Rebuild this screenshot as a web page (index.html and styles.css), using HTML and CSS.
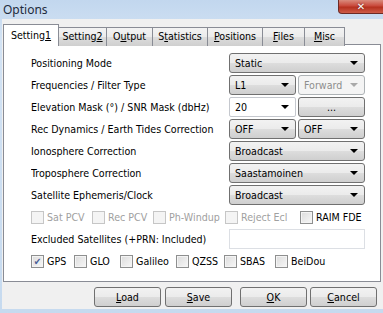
FILE: index.html
```html
<!DOCTYPE html>
<html lang="en">
<head>
  <meta charset="UTF-8">
  <title>Options</title>
  <link rel="stylesheet" href="styles.css">
</head>
<body>
  <div class="window">
    <div class="titlebar">
      <span class="title">Options</span>
      <div class="close"><span class="x">&#x2715;</span></div>
    </div>

    <div class="client">
      <div class="tabs">
        <div class="tab active">Setting<u>1</u></div>
        <div class="tab t-set2">Setting<u>2</u></div>
        <div class="tab t-out">O<u>u</u>tput</div>
        <div class="tab t-stat">S<u>t</u>atistics</div>
        <div class="tab t-pos"><u>P</u>ositions</div>
        <div class="tab t-files"><u>F</u>iles</div>
        <div class="tab t-misc"><u>M</u>isc</div>
      </div>

      <div class="panel">
        <div class="row">
          <span class="label">Positioning Mode</span>
          <div class="combo wide">Static<i class="arrow"></i></div>
        </div>
        <div class="row">
          <span class="label">Frequencies / Filter Type</span>
          <div class="pair">
            <div class="combo">L1<i class="arrow"></i></div>
            <div class="combo disabled">Forward<i class="arrow"></i></div>
          </div>
        </div>
        <div class="row">
          <span class="label">Elevation Mask (&deg;) / SNR Mask (dbHz)</span>
          <div class="pair">
            <div class="combo edit">20<i class="arrow"></i></div>
            <div class="button dots">...</div>
          </div>
        </div>
        <div class="row">
          <span class="label">Rec Dynamics / Earth Tides Correction</span>
          <div class="pair">
            <div class="combo">OFF<i class="arrow"></i></div>
            <div class="combo">OFF<i class="arrow"></i></div>
          </div>
        </div>
        <div class="row">
          <span class="label">Ionosphere Correction</span>
          <div class="combo wide">Broadcast<i class="arrow"></i></div>
        </div>
        <div class="row">
          <span class="label">Troposphere Correction</span>
          <div class="combo wide">Saastamoinen<i class="arrow"></i></div>
        </div>
        <div class="row">
          <span class="label">Satellite Ephemeris/Clock</span>
          <div class="combo wide">Broadcast<i class="arrow"></i></div>
        </div>

        <div class="checks opts">
          <label class="check disabled"><i class="box"></i>Sat PCV</label>
          <label class="check disabled"><i class="box"></i>Rec PCV</label>
          <label class="check disabled"><i class="box"></i>Ph-Windup</label>
          <label class="check disabled"><i class="box"></i>Reject Ecl</label>
          <label class="check"><i class="box"></i>RAIM FDE</label>
        </div>

        <div class="row excl">
          <span class="label">Excluded Satellites (+PRN: Included)</span>
          <div class="textbox"></div>
        </div>

        <div class="checks systems">
          <label class="check"><i class="box on">&#x2714;</i>GPS</label>
          <label class="check"><i class="box"></i>GLO</label>
          <label class="check"><i class="box"></i>Galileo</label>
          <label class="check"><i class="box"></i>QZSS</label>
          <label class="check"><i class="box"></i>SBAS</label>
          <label class="check"><i class="box"></i>BeiDou</label>
        </div>
      </div>

      <div class="buttons">
        <div class="button b-load"><u>L</u>oad</div>
        <div class="button b-save"><u>S</u>ave</div>
        <div class="button b-ok"><u>O</u>K</div>
        <div class="button b-cancel"><u>C</u>ancel</div>
      </div>
    </div>
  </div>
</body>
</html>
```

FILE: styles.css
```css
html, body { margin: 0; padding: 0; }
body { width: 383px; height: 313px; overflow: hidden; font-family: "DejaVu Sans Condensed", "DejaVu Sans", sans-serif; font-size: 10.6px; color: #000; }

.window { width: 383px; height: 313px; background: linear-gradient(#c2d7ee, #d3e3f4 40px, #c6daef); display: flex; flex-direction: column; }

.titlebar { height: 19px; position: relative; flex: none; }
.title { position: absolute; left: 3px; top: 2px; font-family: "Noto Sans", sans-serif; font-size: 12px; line-height: 16px; color: #1e2b3c; }
.close { position: absolute; right: -1px; top: 0; box-sizing: border-box; width: 46px; height: 14px; border: 1px solid #6d2a24; border-top: none; border-radius: 0 0 0 4px; background: linear-gradient(#d98b7d, #c9493b 45%, #b5311f 55%, #cf5c48); display: flex; align-items: center; justify-content: center; }
.x { color: #fff; font-family: "DejaVu Sans", sans-serif; font-size: 10px; font-weight: bold; line-height: 13px; text-shadow: 0 0 2px #5a1b15; }

.client { margin: 0 0 4px 2px; flex: 1; background: #f0f0f0; padding-top: 5px; display: flex; flex-direction: column; }

.tabs { display: flex; height: 21px; padding-left: 1px; position: relative; z-index: 1; }
.tab { box-sizing: border-box; height: 19px; margin-top: 3px; border: 1px solid #898c95; border-bottom: none; border-left: none; background: linear-gradient(#f3f3f3, #ebebeb 50%, #dddddd 51%, #cfcfcf); text-align: center; line-height: 17px; }
.tab.active { height: 22px; margin-top: 0; width: 56px; border-left: 1px solid #898c95; background: #fff; line-height: 21px; }
.t-set2 { width: 48px; }
.t-out { width: 46px; }
.t-stat { width: 55px; }
.t-pos { width: 55px; }
.t-files { width: 42px; }
.t-misc { width: 40px; }

.panel { box-sizing: border-box; width: 378px; height: 238px; margin-left: 1px; margin-top: -1px; border: 1px solid #898c95; background: #fff; padding: 8px 15px 0 27px; display: flex; flex-direction: column; gap: 2px; }

.row { display: flex; align-items: center; height: 20px; }
.label { width: 198px; flex: none; white-space: nowrap; overflow: hidden; }
.pair { display: flex; gap: 2px; width: 136px; }

.combo { position: relative; box-sizing: border-box; height: 20px; width: 67px; border: 1px solid #707070; border-radius: 3px; background: linear-gradient(#f2f2f2, #ebebeb 50%, #dddddd 51%, #cfcfcf); padding-left: 5px; line-height: 18px; }
.combo.wide { width: 136px; }
.combo.edit { background: #fff; border-color: #c5c8ce; border-radius: 2px; }
.combo.disabled { background: #f4f4f4; border-color: #adb2b5; color: #8d8d8d; }
.arrow { position: absolute; right: 6px; top: 7px; width: 0; height: 0; border-left: 4px solid transparent; border-right: 4px solid transparent; border-top: 4px solid #000; }
.combo.disabled .arrow { border-top-color: #a9a9a9; }

.button { box-sizing: border-box; height: 20px; border: 1px solid #707070; border-radius: 3px; background: linear-gradient(#f2f2f2, #ebebeb 50%, #dddddd 51%, #cfcfcf); text-align: center; line-height: 18px; }
.button.dots { width: 67px; }

.checks { display: flex; align-items: center; height: 20px; }
.check { display: flex; align-items: center; flex: none; white-space: nowrap; }
.check.disabled { color: #a0a0a0; }
.box { box-sizing: border-box; width: 13px; height: 13px; margin-right: 3px; border: 1px solid #8e8f8f; background: linear-gradient(135deg, #dcdcdc, #f7f7f7); box-shadow: inset 0 0 0 1px #f4f4f4; font-style: normal; font-size: 10px; line-height: 11px; text-align: center; color: #4a5f97; }
.check.disabled .box { border-color: #c6c6c6; background: #f4f4f4; box-shadow: none; }

.opts .check:nth-child(1) { width: 61px; }
.opts .check:nth-child(2) { width: 61px; }
.opts .check:nth-child(3) { width: 72px; }
.opts .check:nth-child(4) { width: 75px; }

.systems .check:nth-child(1) { width: 43px; }
.systems .check:nth-child(2) { width: 46px; }
.systems .check:nth-child(3) { width: 56px; }
.systems .check:nth-child(4) { width: 48px; }
.systems .check:nth-child(5) { width: 51px; }

.textbox { box-sizing: border-box; width: 138px; height: 20px; border: 1px solid #dcdfe4; background: #fff; }

.buttons { display: flex; padding: 5px 0 0 92px; }
.buttons .button { width: 67px; }
.b-save { margin-left: 4px; }
.b-ok { margin-left: 8px; }
.b-cancel { margin-left: 3px; }
```
